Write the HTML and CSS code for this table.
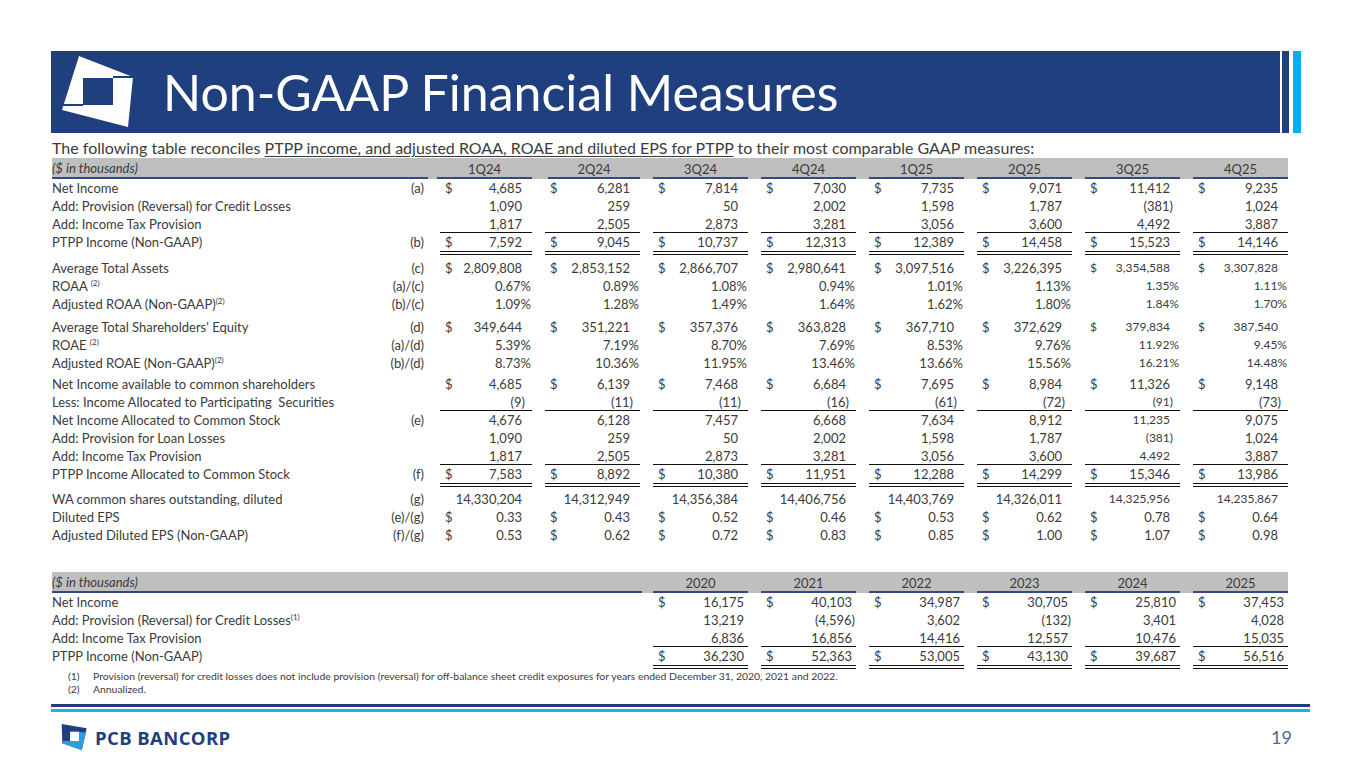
FILE: index.html
```html
<!DOCTYPE html>
<html lang="en">
<head>
<meta charset="utf-8">
<title>Non-GAAP Financial Measures</title>
<link rel="stylesheet" href="styles.css">
</head>
<body>
<div class="topbar">
  <div class="bar">
    <svg class="logo" viewBox="0 0 72 72" aria-hidden="true">
      <polygon points="17,0 71,21 66,71 0,54" fill="#fff"/>
      <rect x="21" y="22" width="30" height="27" fill="#1f3f7e"/>
      <rect x="51" y="20" width="21" height="2" fill="#1f3f7e"/>
      <rect x="-1" y="48" width="22" height="2" fill="#1f3f7e"/>
    </svg>
    <h1 class="title">Non-GAAP Financial Measures</h1>
  </div>
  <div class="stripe1"></div>
  <div class="stripe2"></div>
</div>

<p class="sub">The following table reconciles <u>PTPP income, and adjusted ROAA, ROAE and diluted EPS for PTPP</u> to their most comparable GAAP measures:</p>

<div class="tbl t1">
  <div class="row hd">
    <div class="hl">($ in thousands)</div>
    <div class="v"><div class="h">1Q24</div></div>
    <div class="v"><div class="h">2Q24</div></div>
    <div class="v"><div class="h">3Q24</div></div>
    <div class="v"><div class="h">4Q24</div></div>
    <div class="v"><div class="h">1Q25</div></div>
    <div class="v"><div class="h">2Q25</div></div>
    <div class="v"><div class="h">3Q25</div></div>
    <div class="v"><div class="h">4Q25</div></div>
  </div>

  <div class="row">
    <div class="lab">Net Income</div><div class="ref">(a)</div>
    <div class="v"><div class="b"><span class="d">$</span>4,685</div></div>
    <div class="v"><div class="b"><span class="d">$</span>6,281</div></div>
    <div class="v"><div class="b"><span class="d">$</span>7,814</div></div>
    <div class="v"><div class="b"><span class="d">$</span>7,030</div></div>
    <div class="v"><div class="b"><span class="d">$</span>7,735</div></div>
    <div class="v"><div class="b"><span class="d">$</span>9,071</div></div>
    <div class="v"><div class="b"><span class="d">$</span>11,412</div></div>
    <div class="v"><div class="b"><span class="d">$</span>9,235</div></div>
  </div>
  <div class="row">
    <div class="lab">Add: Provision (Reversal) for Credit Losses</div><div class="ref"></div>
    <div class="v"><div class="b">1,090</div></div>
    <div class="v"><div class="b">259</div></div>
    <div class="v"><div class="b">50</div></div>
    <div class="v"><div class="b">2,002</div></div>
    <div class="v"><div class="b">1,598</div></div>
    <div class="v"><div class="b">1,787</div></div>
    <div class="v"><div class="b q">(381)</div></div>
    <div class="v"><div class="b">1,024</div></div>
  </div>
  <div class="row u">
    <div class="lab">Add: Income Tax Provision</div><div class="ref"></div>
    <div class="v"><div class="b">1,817</div></div>
    <div class="v"><div class="b">2,505</div></div>
    <div class="v"><div class="b">2,873</div></div>
    <div class="v"><div class="b">3,281</div></div>
    <div class="v"><div class="b">3,056</div></div>
    <div class="v"><div class="b">3,600</div></div>
    <div class="v"><div class="b">4,492</div></div>
    <div class="v"><div class="b">3,887</div></div>
  </div>
  <div class="row uu">
    <div class="lab">PTPP Income (Non-GAAP)</div><div class="ref">(b)</div>
    <div class="v"><div class="b"><span class="d">$</span>7,592</div></div>
    <div class="v"><div class="b"><span class="d">$</span>9,045</div></div>
    <div class="v"><div class="b"><span class="d">$</span>10,737</div></div>
    <div class="v"><div class="b"><span class="d">$</span>12,313</div></div>
    <div class="v"><div class="b"><span class="d">$</span>12,389</div></div>
    <div class="v"><div class="b"><span class="d">$</span>14,458</div></div>
    <div class="v"><div class="b"><span class="d">$</span>15,523</div></div>
    <div class="v"><div class="b"><span class="d">$</span>14,146</div></div>
  </div>

  <div class="row g4">
    <div class="lab">Average Total Assets</div><div class="ref">(c)</div>
    <div class="v"><div class="b"><span class="d">$</span>2,809,808</div></div>
    <div class="v"><div class="b"><span class="d">$</span>2,853,152</div></div>
    <div class="v"><div class="b"><span class="d">$</span>2,866,707</div></div>
    <div class="v"><div class="b"><span class="d">$</span>2,980,641</div></div>
    <div class="v"><div class="b"><span class="d">$</span>3,097,516</div></div>
    <div class="v"><div class="b"><span class="d">$</span>3,226,395</div></div>
    <div class="v sm"><div class="b"><span class="d">$</span>3,354,588</div></div>
    <div class="v sm"><div class="b"><span class="d">$</span>3,307,828</div></div>
  </div>
  <div class="row">
    <div class="lab">ROAA <sup>(2)</sup></div><div class="ref">(a)/(c)</div>
    <div class="v"><div class="b p">0.67%</div></div>
    <div class="v"><div class="b p">0.89%</div></div>
    <div class="v"><div class="b p">1.08%</div></div>
    <div class="v"><div class="b p">0.94%</div></div>
    <div class="v"><div class="b p">1.01%</div></div>
    <div class="v"><div class="b p">1.13%</div></div>
    <div class="v sm"><div class="b p">1.35%</div></div>
    <div class="v sm"><div class="b p">1.11%</div></div>
  </div>
  <div class="row">
    <div class="lab">Adjusted ROAA (Non-GAAP)<sup>(2)</sup></div><div class="ref">(b)/(c)</div>
    <div class="v"><div class="b p">1.09%</div></div>
    <div class="v"><div class="b p">1.28%</div></div>
    <div class="v"><div class="b p">1.49%</div></div>
    <div class="v"><div class="b p">1.64%</div></div>
    <div class="v"><div class="b p">1.62%</div></div>
    <div class="v"><div class="b p">1.80%</div></div>
    <div class="v sm"><div class="b p">1.84%</div></div>
    <div class="v sm"><div class="b p">1.70%</div></div>
  </div>

  <div class="row g5">
    <div class="lab">Average Total Shareholders' Equity</div><div class="ref">(d)</div>
    <div class="v"><div class="b"><span class="d">$</span>349,644</div></div>
    <div class="v"><div class="b"><span class="d">$</span>351,221</div></div>
    <div class="v"><div class="b"><span class="d">$</span>357,376</div></div>
    <div class="v"><div class="b"><span class="d">$</span>363,828</div></div>
    <div class="v"><div class="b"><span class="d">$</span>367,710</div></div>
    <div class="v"><div class="b"><span class="d">$</span>372,629</div></div>
    <div class="v sm"><div class="b"><span class="d">$</span>379,834</div></div>
    <div class="v sm"><div class="b"><span class="d">$</span>387,540</div></div>
  </div>
  <div class="row">
    <div class="lab">ROAE <sup>(2)</sup></div><div class="ref">(a)/(d)</div>
    <div class="v"><div class="b p">5.39%</div></div>
    <div class="v"><div class="b p">7.19%</div></div>
    <div class="v"><div class="b p">8.70%</div></div>
    <div class="v"><div class="b p">7.69%</div></div>
    <div class="v"><div class="b p">8.53%</div></div>
    <div class="v"><div class="b p">9.76%</div></div>
    <div class="v sm"><div class="b p">11.92%</div></div>
    <div class="v sm"><div class="b p">9.45%</div></div>
  </div>
  <div class="row">
    <div class="lab">Adjusted ROAE (Non-GAAP)<sup>(2)</sup></div><div class="ref">(b)/(d)</div>
    <div class="v"><div class="b p">8.73%</div></div>
    <div class="v"><div class="b p">10.36%</div></div>
    <div class="v"><div class="b p">11.95%</div></div>
    <div class="v"><div class="b p">13.46%</div></div>
    <div class="v"><div class="b p">13.66%</div></div>
    <div class="v"><div class="b p">15.56%</div></div>
    <div class="v sm"><div class="b p">16.21%</div></div>
    <div class="v sm"><div class="b p">14.48%</div></div>
  </div>

  <div class="row g3">
    <div class="lab">Net Income available to common shareholders</div><div class="ref"></div>
    <div class="v"><div class="b"><span class="d">$</span>4,685</div></div>
    <div class="v"><div class="b"><span class="d">$</span>6,139</div></div>
    <div class="v"><div class="b"><span class="d">$</span>7,468</div></div>
    <div class="v"><div class="b"><span class="d">$</span>6,684</div></div>
    <div class="v"><div class="b"><span class="d">$</span>7,695</div></div>
    <div class="v"><div class="b"><span class="d">$</span>8,984</div></div>
    <div class="v"><div class="b"><span class="d">$</span>11,326</div></div>
    <div class="v"><div class="b"><span class="d">$</span>9,148</div></div>
  </div>
  <div class="row u">
    <div class="lab">Less: Income Allocated to Participating&nbsp; Securities</div><div class="ref"></div>
    <div class="v"><div class="b q">(9)</div></div>
    <div class="v"><div class="b q">(11)</div></div>
    <div class="v"><div class="b q">(11)</div></div>
    <div class="v"><div class="b q">(16)</div></div>
    <div class="v"><div class="b q">(61)</div></div>
    <div class="v"><div class="b q">(72)</div></div>
    <div class="v sm"><div class="b q">(91)</div></div>
    <div class="v"><div class="b q">(73)</div></div>
  </div>
  <div class="row">
    <div class="lab">Net Income Allocated to Common Stock</div><div class="ref">(e)</div>
    <div class="v"><div class="b">4,676</div></div>
    <div class="v"><div class="b">6,128</div></div>
    <div class="v"><div class="b">7,457</div></div>
    <div class="v"><div class="b">6,668</div></div>
    <div class="v"><div class="b">7,634</div></div>
    <div class="v"><div class="b">8,912</div></div>
    <div class="v sm"><div class="b">11,235</div></div>
    <div class="v"><div class="b">9,075</div></div>
  </div>
  <div class="row">
    <div class="lab">Add: Provision for Loan Losses</div><div class="ref"></div>
    <div class="v"><div class="b">1,090</div></div>
    <div class="v"><div class="b">259</div></div>
    <div class="v"><div class="b">50</div></div>
    <div class="v"><div class="b">2,002</div></div>
    <div class="v"><div class="b">1,598</div></div>
    <div class="v"><div class="b">1,787</div></div>
    <div class="v sm"><div class="b q">(381)</div></div>
    <div class="v"><div class="b">1,024</div></div>
  </div>
  <div class="row u">
    <div class="lab">Add: Income Tax Provision</div><div class="ref"></div>
    <div class="v"><div class="b">1,817</div></div>
    <div class="v"><div class="b">2,505</div></div>
    <div class="v"><div class="b">2,873</div></div>
    <div class="v"><div class="b">3,281</div></div>
    <div class="v"><div class="b">3,056</div></div>
    <div class="v"><div class="b">3,600</div></div>
    <div class="v sm"><div class="b">4,492</div></div>
    <div class="v"><div class="b">3,887</div></div>
  </div>
  <div class="row uu">
    <div class="lab">PTPP Income Allocated to Common Stock</div><div class="ref">(f)</div>
    <div class="v"><div class="b"><span class="d">$</span>7,583</div></div>
    <div class="v"><div class="b"><span class="d">$</span>8,892</div></div>
    <div class="v"><div class="b"><span class="d">$</span>10,380</div></div>
    <div class="v"><div class="b"><span class="d">$</span>11,951</div></div>
    <div class="v"><div class="b"><span class="d">$</span>12,288</div></div>
    <div class="v"><div class="b"><span class="d">$</span>14,299</div></div>
    <div class="v"><div class="b"><span class="d">$</span>15,346</div></div>
    <div class="v"><div class="b"><span class="d">$</span>13,986</div></div>
  </div>

  <div class="row g3">
    <div class="lab">WA common shares outstanding, diluted</div><div class="ref">(g)</div>
    <div class="v"><div class="b">14,330,204</div></div>
    <div class="v"><div class="b">14,312,949</div></div>
    <div class="v"><div class="b">14,356,384</div></div>
    <div class="v"><div class="b">14,406,756</div></div>
    <div class="v"><div class="b">14,403,769</div></div>
    <div class="v"><div class="b">14,326,011</div></div>
    <div class="v sm"><div class="b">14,325,956</div></div>
    <div class="v sm"><div class="b">14,235,867</div></div>
  </div>
  <div class="row">
    <div class="lab">Diluted EPS</div><div class="ref">(e)/(g)</div>
    <div class="v"><div class="b"><span class="d">$</span>0.33</div></div>
    <div class="v"><div class="b"><span class="d">$</span>0.43</div></div>
    <div class="v"><div class="b"><span class="d">$</span>0.52</div></div>
    <div class="v"><div class="b"><span class="d">$</span>0.46</div></div>
    <div class="v"><div class="b"><span class="d">$</span>0.53</div></div>
    <div class="v"><div class="b"><span class="d">$</span>0.62</div></div>
    <div class="v"><div class="b"><span class="d">$</span>0.78</div></div>
    <div class="v"><div class="b"><span class="d">$</span>0.64</div></div>
  </div>
  <div class="row">
    <div class="lab">Adjusted Diluted EPS (Non-GAAP)</div><div class="ref">(f)/(g)</div>
    <div class="v"><div class="b"><span class="d">$</span>0.53</div></div>
    <div class="v"><div class="b"><span class="d">$</span>0.62</div></div>
    <div class="v"><div class="b"><span class="d">$</span>0.72</div></div>
    <div class="v"><div class="b"><span class="d">$</span>0.83</div></div>
    <div class="v"><div class="b"><span class="d">$</span>0.85</div></div>
    <div class="v"><div class="b"><span class="d">$</span>1.00</div></div>
    <div class="v"><div class="b"><span class="d">$</span>1.07</div></div>
    <div class="v"><div class="b"><span class="d">$</span>0.98</div></div>
  </div>
</div>

<div class="tbl t2">
  <div class="row hd">
    <div class="hl wide">($ in thousands)</div>
    <div class="v"><div class="h">2020</div></div>
    <div class="v"><div class="h">2021</div></div>
    <div class="v"><div class="h">2022</div></div>
    <div class="v"><div class="h">2023</div></div>
    <div class="v"><div class="h">2024</div></div>
    <div class="v"><div class="h">2025</div></div>
  </div>
  <div class="row">
    <div class="lab wide">Net Income</div>
    <div class="v"><div class="b"><span class="d">$</span>16,175</div></div>
    <div class="v"><div class="b"><span class="d">$</span>40,103</div></div>
    <div class="v"><div class="b"><span class="d">$</span>34,987</div></div>
    <div class="v"><div class="b"><span class="d">$</span>30,705</div></div>
    <div class="v"><div class="b"><span class="d">$</span>25,810</div></div>
    <div class="v"><div class="b"><span class="d">$</span>37,453</div></div>
  </div>
  <div class="row">
    <div class="lab wide">Add: Provision (Reversal) for Credit Losses<sup>(1)</sup></div>
    <div class="v"><div class="b">13,219</div></div>
    <div class="v"><div class="b q">(4,596)</div></div>
    <div class="v"><div class="b">3,602</div></div>
    <div class="v"><div class="b q">(132)</div></div>
    <div class="v"><div class="b">3,401</div></div>
    <div class="v"><div class="b">4,028</div></div>
  </div>
  <div class="row u">
    <div class="lab wide">Add: Income Tax Provision</div>
    <div class="v"><div class="b">6,836</div></div>
    <div class="v"><div class="b">16,856</div></div>
    <div class="v"><div class="b">14,416</div></div>
    <div class="v"><div class="b">12,557</div></div>
    <div class="v"><div class="b">10,476</div></div>
    <div class="v"><div class="b">15,035</div></div>
  </div>
  <div class="row uu">
    <div class="lab wide">PTPP Income (Non-GAAP)</div>
    <div class="v"><div class="b"><span class="d">$</span>36,230</div></div>
    <div class="v"><div class="b"><span class="d">$</span>52,363</div></div>
    <div class="v"><div class="b"><span class="d">$</span>53,005</div></div>
    <div class="v"><div class="b"><span class="d">$</span>43,130</div></div>
    <div class="v"><div class="b"><span class="d">$</span>39,687</div></div>
    <div class="v"><div class="b"><span class="d">$</span>56,516</div></div>
  </div>
</div>

<div class="notes">
  <div class="note"><span class="nn">(1)</span><span>Provision (reversal) for credit losses does not include provision (reversal) for off-balance sheet credit exposures for years ended December 31, 2020, 2021 and 2022.</span></div>
  <div class="note"><span class="nn">(2)</span><span>Annualized.</span></div>
</div>

<div class="rule"></div>
<div class="rule2"></div>

<div class="footer">
  <div class="brand">
    <svg class="mark" viewBox="0 0 28 28" aria-hidden="true">
      <polygon points="0.7,1 25.7,5.3 20.7,27 1.3,20.3" fill="#1f3f7e"/>
      <polygon points="18,8.7 25.1,9.6 20.7,27 1.3,20.3 1.6,18 18,18" fill="#2b9fdc"/>
      <rect x="9" y="8.7" width="9" height="9.3" fill="#fff"/>
    </svg>
    <span class="bname">PCB BANCORP</span>
  </div>
  <div class="pg">19</div>
</div>
</body>
</html>
```

FILE: styles.css
```css
* { box-sizing: border-box; margin: 0; padding: 0; }
html, body { width: 1365px; height: 768px; overflow: hidden; background: #fff; }
body { font-family: Lato, "Open Sans", sans-serif; color: #3b3b3b; font-weight: 400; }

.topbar { display: flex; margin: 51px 0 0 51px; height: 82px; }
.bar { width: 1229px; background: #1f3f7e; display: flex; align-items: center; }
.logo { flex: none; width: 72px; height: 72px; margin-left: 11px; }
.title { margin-left: 29px; color: #fff; font-size: 50px; font-weight: 400; line-height: 1; white-space: nowrap; }
.stripe1 { width: 7px; margin-left: 2px; background: #1f3f7e; }
.stripe2 { width: 8px; margin-left: 4px; background: #00b0f0; }

.sub { margin: 6px 0 0 52px; font-size: 16px; line-height: 18px; white-space: nowrap; }
.sub u { text-decoration-thickness: 1px; text-underline-offset: 2px; }

.tbl { margin-left: 52px; width: 1236px; font-size: 13px; }
.t1 { margin-top: 1px; }
.t2 { margin-top: 28px; }

.row { display: grid; grid-template-columns: 328px 44px repeat(8, 108px); line-height: 18px; }
.g3 { margin-top: 3px; }
.g4 { margin-top: 4px; }
.g5 { margin-top: 5px; }

.lab { white-space: nowrap; height: 18px; }
.ref { text-align: right; white-space: nowrap; }
.wide { grid-column: span 4; }
sup { font-size: 8px; line-height: 0; vertical-align: 5px; }

.v { padding-left: 13px; }
.t1 .row > .v:nth-child(3) { padding-left: 16px; }
.b { display: flex; justify-content: flex-end; height: 18px; padding: 0 10px 0 5px; white-space: nowrap; }
.b .d { margin-right: auto; }
.b.p { padding-right: 1px; }
.b.q { padding-right: 7px; }
.t2 .b { padding-right: 4px; }
.t2 .b.q { padding-right: 1px; }
.sm { font-size: 12px; }

.u .b { height: 18px; border-bottom: 1px solid #111; }
.uu .b { height: 22px; border-bottom: 4px double #111; }

.hd { background: #bfbfbf; height: 21px; }
.hl { grid-column: span 2; height: 21px; border-bottom: 2px solid #2f4a86; font-style: italic; line-height: 20px; }
.hl.wide { grid-column: span 4; margin-right: -2px; }
.t1 .hl { margin-right: -4px; }
.h { height: 21px; border-bottom: 2px solid #2f4a86; text-align: center; line-height: 22px; }

.notes { margin: 1px 0 0 68px; font-size: 10.4px; line-height: 13px; }
.note { display: flex; white-space: nowrap; }
.nn { width: 25px; flex: none; }

.rule { margin: 8px 0 0 51px; width: 1259px; height: 3px; background: #1f3f7e; }
.rule2 { margin: 2px 0 0 51px; width: 1259px; height: 3px; background: #17b2ea; }

.footer { display: flex; align-items: center; justify-content: space-between; height: 50px; padding: 0 73px 0 61px; }
.brand { display: flex; align-items: center; }
.mark { width: 28px; height: 28px; flex: none; }
.bname { margin-left: 6px; color: #1f3f7e; font-family: "Open Sans", sans-serif; font-weight: 700; font-size: 18.5px; letter-spacing: 0.4px; }
.pg { color: #4f6a8f; font-size: 18px; }
```
